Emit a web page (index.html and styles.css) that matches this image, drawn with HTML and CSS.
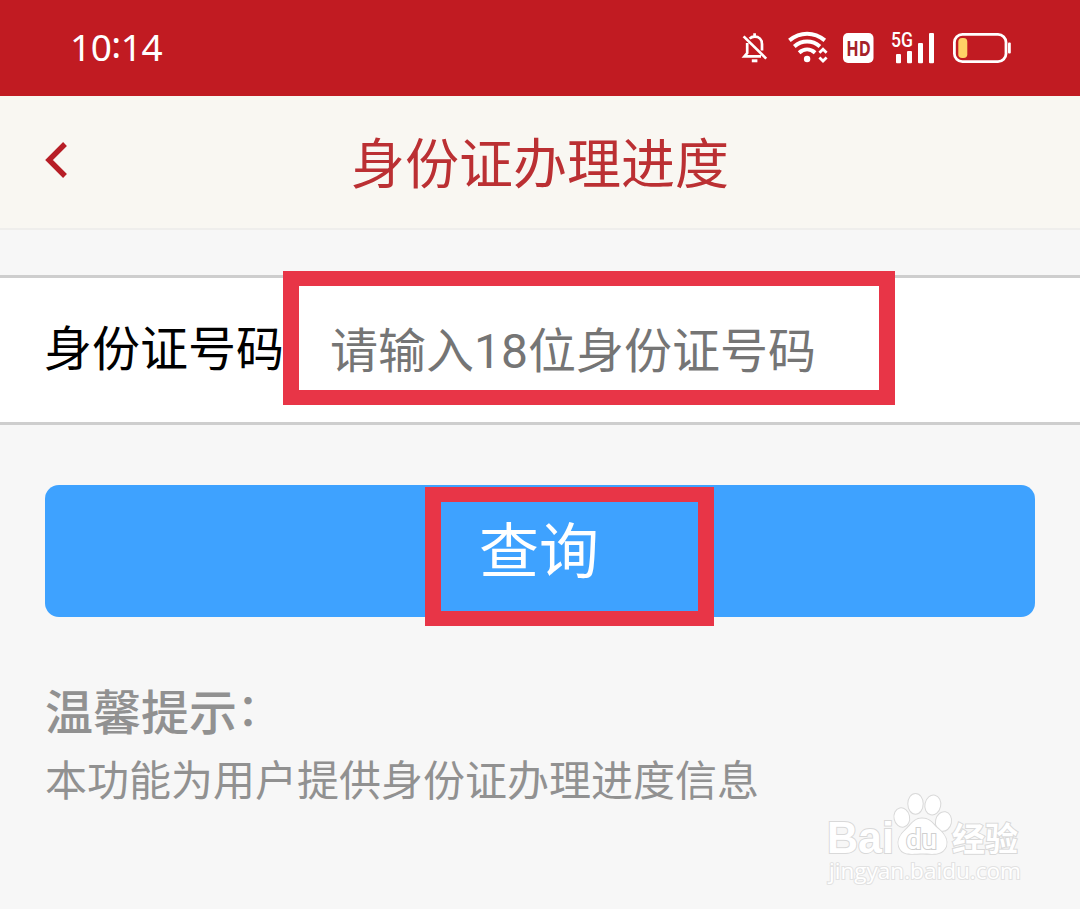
FILE: index.html
```html
<!DOCTYPE html>
<html lang="zh-CN">
<head>
  <meta charset="UTF-8">
  <meta name="viewport" content="width=device-width, initial-scale=1.0">
  <title>身份证办理进度</title>
  <link rel="stylesheet" href="styles.css">
</head>
<body>
  <div class="status-bar">
    <span class="time">10<span class="time-sep">:</span>14</span>
    <div class="status-icons">
      <svg class="icon-bell" width="28" height="32" viewBox="0 0 28 32" fill="none" stroke="#fff" stroke-width="2.7">
        <path d="M8.6 6.6C9.9 5.3 11.6 4.7 13.6 4.7C18 4.7 21 7.8 21 12V18.5M6.2 11V21L3.4 24.4H20M13.6 1.2V5"/>
        <path d="M2.6 4.4L25.2 26.6"/>
        <path d="M10.8 28.8H16.4" stroke-width="3"/>
      </svg>
      <svg class="icon-wifi" width="42" height="32" viewBox="0 0 42 32" fill="none" stroke="#fff" stroke-width="4">
        <path d="M1.4 8.4C12.2 -.5 26 -.5 36.8 8.4"/>
        <path d="M6.3 14.5C14 7.9 24.2 7.9 31.9 14.5"/>
        <path d="M11.1 20.7C16.1 16.4 22.1 16.4 27.1 20.7"/>
        <circle cx="19.1" cy="27" r="3.2" fill="#fff" stroke="none"/>
        <path d="M31.4 20.7L35 17.2L38.6 20.7M31.4 25.5L35 29L38.6 25.5" stroke-width="2.8"/>
      </svg>
      <svg class="icon-hd" width="31" height="32" viewBox="0 0 31 32">
        <rect x="0" y="1" width="30.5" height="30" rx="5" fill="#fff"/>
        <text x="3.3" y="23.5" textLength="24.5" lengthAdjust="spacingAndGlyphs">HD</text>
      </svg>
      <svg class="icon-signal" width="44" height="32" viewBox="0 0 44 32" fill="#fff">
        <text x="0" y="15.3" textLength="22" lengthAdjust="spacingAndGlyphs">5G</text>
        <rect x="5" y="22" width="5" height="9.3" rx="1"/>
        <rect x="16" y="19" width="5" height="12.3" rx="1"/>
        <rect x="27" y="11" width="5" height="20.3" rx="1"/>
        <rect x="38" y="1" width="5" height="30.3" rx="1"/>
      </svg>
      <svg class="icon-battery" width="60" height="32" viewBox="0 0 60 32">
        <rect x="2.4" y="2.3" width="51.6" height="27.4" rx="8" fill="none" stroke="#fff" stroke-width="2.8"/>
        <rect x="6.3" y="6" width="9" height="20" rx="3.8" fill="#ffd166"/>
        <rect x="56" y="10.5" width="2.8" height="11" rx="1" fill="#fff"/>
      </svg>
    </div>
  </div>

  <header class="nav">
    <svg class="back" width="24" height="40" viewBox="0 0 24 40" fill="none" stroke="#b71e26" stroke-width="5.4">
      <path d="M21 4L5 20L21 36"/>
    </svg>
    <h1>身份证办理进度</h1>
  </header>

  <main>
    <div class="form-row">
      <label for="idNumber">身份证号码</label>
      <div class="field">
        <input type="text" id="idNumber" name="idNumber" placeholder="请输入18位身份证号码">
        <div class="mark mark-input"></div>
      </div>
    </div>
    <div class="action">
      <button id="queryBtn">查询</button>
      <div class="mark mark-button"></div>
    </div>
    <div class="tips">
      <h2>温馨提示<span class="colon">：</span></h2>
      <p>本功能为用户提供身份证办理进度信息</p>
    </div>
  </main>

  <svg class="watermark" width="210" height="100" viewBox="0 0 210 100">
    <g class="wm-shape">
      <ellipse cx="81.8" cy="27.5" rx="7.3" ry="9.3" transform="rotate(-12 81.8 27.5)"/>
      <ellipse cx="95.5" cy="13.8" rx="7.2" ry="9.9"/>
      <ellipse cx="112.8" cy="15" rx="7.4" ry="9.5" transform="rotate(12 112.8 15)"/>
      <ellipse cx="123.5" cy="31.5" rx="7.5" ry="9.4" transform="rotate(12 123.5 31.5)"/>
      <path d="M102 28.5C94 28.5 91 35 86 39.5C80 45 77 50 79 56.5C82 66.5 94 63.5 102 63.5C110 63.5 122 66.5 126 56.5C128 50 125 45 119 39.5C113 35 111 28.5 102 28.5Z"/>
    </g>
    <text class="wm-bai" x="7" y="63" textLength="67" lengthAdjust="spacingAndGlyphs">Bai</text>
    <text class="wm-du" x="86" y="58.5" textLength="31" lengthAdjust="spacingAndGlyphs">du</text>
    <text class="wm-cn" x="132" y="60.5" textLength="66">经验</text>
    <text class="wm-url" x="9" y="89" textLength="192" lengthAdjust="spacingAndGlyphs">jingyan.baidu.com</text>
  </svg>
</body>
</html>
```
FILE: styles.css
```css
* { box-sizing: border-box; margin: 0; padding: 0; }
body {
  position: relative;
  height: 909px;
  overflow: hidden;
  background: #f7f7f7;
  font-family: Roboto, "Noto Sans CJK SC", sans-serif;
}
.status-bar {
  display: flex;
  justify-content: space-between;
  align-items: center;
  height: 96px;
  padding: 0 68px 0 70px;
  background: #c11b22;
  color: #fff;
}
.time {
  padding-bottom: 2px;
  font-family: "Noto Sans", sans-serif;
  font-size: 37px;
  line-height: 94px;
  letter-spacing: -0.5px;
}
.time-sep { position: relative; top: -3px; }
.status-icons { display: flex; align-items: center; }
.status-icons svg { overflow: visible; }
.icon-bell { margin-right: 19px; }
.icon-wifi { margin-right: 13px; }
.icon-hd { margin-right: 17px; }
.icon-hd text {
  fill: #a5222a;
  font: bold 20.5px "Open Sans", sans-serif;
}
.icon-signal { margin-right: 17px; }
.icon-signal text { font: 500 19.5px Roboto, sans-serif; }
.nav {
  display: flex;
  align-items: center;
  height: 134px;
  padding: 0 44px;
  border-bottom: 2px solid #efeeec;
  background: #f9f7f2;
}
.back { margin-bottom: 4px; }
h1 {
  flex: 1;
  margin-right: 24px;
  padding-top: 8px;
  color: #bb3033;
  font-size: 54px;
  font-weight: 400;
  line-height: 80px;
  text-align: center;
}
.form-row {
  display: flex;
  align-items: center;
  height: 150px;
  margin-top: 45px;
  padding-left: 44px;
  border-top: 3px solid #cecece;
  border-bottom: 3px solid #cecece;
  background: #fff;
  font-size: 48px;
}
label { width: 241px; padding-bottom: 10px; color: #000; white-space: nowrap; }
.field { position: relative; flex: 1; }
input {
  display: block;
  width: 100%;
  height: 144px;
  padding: 2px 0 0 45px;
  border: none;
  outline: none;
  background: transparent;
  font: inherit;
}
input::placeholder { color: #757575; opacity: 1; }
.action { position: relative; margin: 60px 45px 0; }
button {
  display: block;
  width: 100%;
  height: 132px;
  padding: 3px 2px 0 0;
  border: none;
  border-radius: 14px;
  background: #3ea2ff;
  color: #fff;
  font-family: inherit;
  font-size: 60px;
  line-height: 128px;
}
/* red highlight frames */
.mark { position: absolute; border: 16px solid #e83547; pointer-events: none; }
.mark-input { left: -2px; top: -7px; width: 612px; height: 134px; border-width: 15px 16px; }
.mark-button { left: 380px; top: 2px; width: 289px; height: 139px; border-width: 15px 16px; }
.tips { padding: 61px 45px 0; color: #919191; }
h2 { font-size: 48px; font-weight: 500; line-height: 72px; }
.colon { position: relative; top: -4px; font-size: 44px; }
.tips p { font-size: 42px; line-height: 62px; }
.watermark { position: absolute; left: 820px; top: 790px; }
.watermark text, .wm-shape {
  fill: #fff;
  stroke: #d9d9d9;
  stroke-width: 2px;
  paint-order: stroke;
}
.wm-bai { font: bold 44px "Liberation Sans", sans-serif; }
.watermark .wm-du { font: 500 27px Roboto, sans-serif; stroke: #cfcfcf; }
.wm-cn { font: bold 33px "Noto Sans CJK SC", sans-serif; }
.watermark .wm-url { font: 22px "Open Sans", sans-serif; stroke: #e2e2e2; }
```
